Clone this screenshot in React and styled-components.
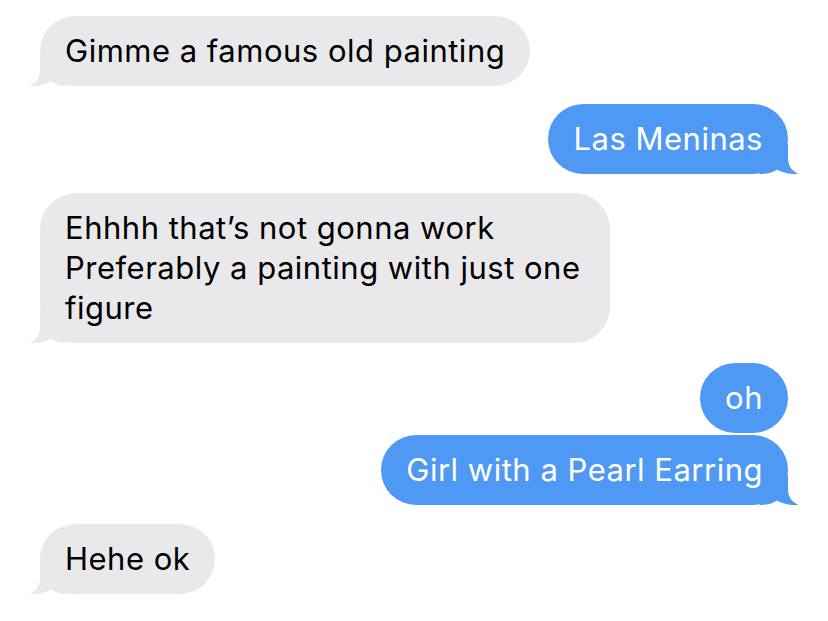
import React from "react";
import styled, { createGlobalStyle } from "styled-components";

const GlobalStyle = createGlobalStyle`
    html, body {
        margin: 0;
        padding: 0;
        background: #ffffff;
    }
    body {
        font-family: "Inter", "Noto Sans", sans-serif;
        -webkit-font-smoothing: antialiased;
    }
`;

const GREY = "#e9e9eb";
const BLUE = "#4f99f5";

const Thread = styled.div`
    display: flex;
    flex-direction: column;
    padding: 16px 40px 20px 40px;
`;

const Row = styled.div`
    display: flex;
    justify-content: ${({ $mine }) => ($mine ? "flex-end" : "flex-start")};
    margin-top: ${({ $gap }) => $gap}px;
`;

const Bubble = styled.div`
    position: relative;
    box-sizing: border-box;
    max-width: 570px;
    padding: 15px 25px;
    border-radius: 36px;
    background: ${({ $mine }) => ($mine ? BLUE : GREY)};
    color: ${({ $mine }) => ($mine ? "#ffffff" : "#000000")};
    font-size: 31px;
    line-height: 40px;
    letter-spacing: 0.5px;
`;

const Tail = styled.svg`
    position: absolute;
    bottom: 0;
    width: 40px;
    height: 30px;
    ${({ $mine }) =>
        $mine
            ? "right: -12px; transform: scaleX(-1);"
            : "left: -12px;"}
`;

const Text = styled.span`
    position: relative;
    white-space: pre-line;
`;

function BubbleTail({ mine }) {
    return (
        <Tail $mine={mine} viewBox="0 0 40 30">
            <path
                d="M12 0 L12 14 C12 22 8 27 1.5 30 C9 30.6 17 29 23 25.5 C27 28.5 33 30 40 30 L40 0 Z"
                fill={mine ? BLUE : GREY}
            />
        </Tail>
    );
}

const messages = [
    { mine: false, gap: 0, tail: true, text: "Gimme a famous old painting" },
    { mine: true, gap: 18, tail: true, text: "Las Meninas" },
    {
        mine: false,
        gap: 19,
        tail: true,
        text: "Ehhhh that\u2019s not gonna work\nPreferably a painting with just one figure",
    },
    { mine: true, gap: 20, tail: false, text: "oh" },
    { mine: true, gap: 2, tail: true, text: "Girl with a Pearl Earring" },
    { mine: false, gap: 19, tail: true, text: "Hehe ok" },
];

export default function App() {
    return (
        <>
            <GlobalStyle />
            <Thread>
                {messages.map((m, i) => (
                    <Row key={i} $mine={m.mine} $gap={m.gap}>
                        <Bubble $mine={m.mine}>
                            {m.tail && <BubbleTail mine={m.mine} />}
                            <Text>{m.text}</Text>
                        </Bubble>
                    </Row>
                ))}
            </Thread>
        </>
    );
}
